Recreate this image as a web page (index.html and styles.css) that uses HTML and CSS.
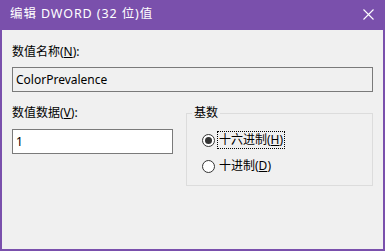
FILE: index.html
```html
<!DOCTYPE html>
<html lang="zh-CN">
<head>
    <meta charset="UTF-8">
    <title>编辑 DWORD (32 位)值</title>
    <link rel="stylesheet" href="styles.css">
</head>
<body>
    <div class="dialog">
        <!-- Title bar -->
        <div class="titlebar">
            <span class="title">编辑 DWORD (32 位)值</span>
            <svg class="close" width="11" height="11" viewBox="0 0 11 11">
                <path d="M0.5 0.5 L10.5 10.5 M10.5 0.5 L0.5 10.5" stroke="#fff" stroke-width="1.1" fill="none"/>
            </svg>
        </div>

        <div class="content">
            <div class="label">数值名称(<u>N</u>):</div>
            <div class="field-box readonly">ColorPrevalence</div>

            <div class="lower">
                <div class="data-col">
                    <div class="label">数值数据(<u>V</u>):</div>
                    <div class="field-box">1</div>
                </div>

                <fieldset class="base-group">
                    <legend>基数</legend>
                    <div class="radios">
                        <div class="radio-row">
                            <span class="radio checked"></span>
                            <span class="radio-label focused">十六进制(<u>H</u>)</span>
                        </div>
                        <div class="radio-row">
                            <span class="radio"></span>
                            <span class="radio-label">十进制(<u>D</u>)</span>
                        </div>
                    </div>
                </fieldset>
            </div>
        </div>
    </div>
</body>
</html>
```

FILE: styles.css
```css
* {
    margin: 0;
    padding: 0;
    box-sizing: border-box;
}

body {
    font-family: "Noto Sans", "Noto Sans CJK SC", sans-serif;
    font-size: 12px;
    line-height: 16px;
    color: #000;
    background: #f0f0f0;
}

.dialog {
    width: 385px;
    height: 251px;
    border: 2px solid #7a50ac;
    border-top: none;
    background: #f0f0f0;
    display: flex;
    flex-direction: column;
}

.titlebar {
    height: 30px;
    background: #7a50ac;
    color: #fff;
    display: flex;
    align-items: center;
    justify-content: space-between;
    padding: 0 9px 2px 8px;
}

.title {
    font-size: 12.5px;
    letter-spacing: 0.9px;
}

.content {
    padding: 14px 10px 0 10px;
}

.label {
    height: 16px;
    margin-bottom: 7px;
}

.field-box {
    height: 25px;
    border: 1px solid #7a7a7a;
    background: #fff;
    padding: 0 3px;
    display: flex;
    align-items: center;
}

.field-box.readonly {
    background: #f0f0f0;
}

.data-col .label {
    margin-bottom: 8px;
}

.lower {
    display: grid;
    grid-template-columns: 161px 1fr;
    column-gap: 13px;
    margin-top: 13px;
}

.base-group {
    height: 81px;
    border: 1px solid #dcdcdc;
    padding: 0;
    margin: 0;
}

.base-group legend {
    margin-left: 5px;
    padding: 0 2px;
    line-height: 16px;
}

.radios {
    display: flex;
    flex-direction: column;
    gap: 8px;
    padding: 10px 0 0 15px;
}

.radio-row {
    display: flex;
    align-items: center;
    gap: 2px;
    height: 18px;
}

.radio {
    width: 13px;
    height: 13px;
    border: 1px solid #333;
    border-radius: 50%;
    background: #fff;
    display: flex;
    align-items: center;
    justify-content: center;
}

.radio.checked::after {
    content: "";
    width: 7px;
    height: 7px;
    border-radius: 50%;
    background: #333;
}

.radio-label {
    border: 1px dotted transparent;
    padding: 0 1px;
}

.radio-label.focused {
    border-color: #000;
}
```
